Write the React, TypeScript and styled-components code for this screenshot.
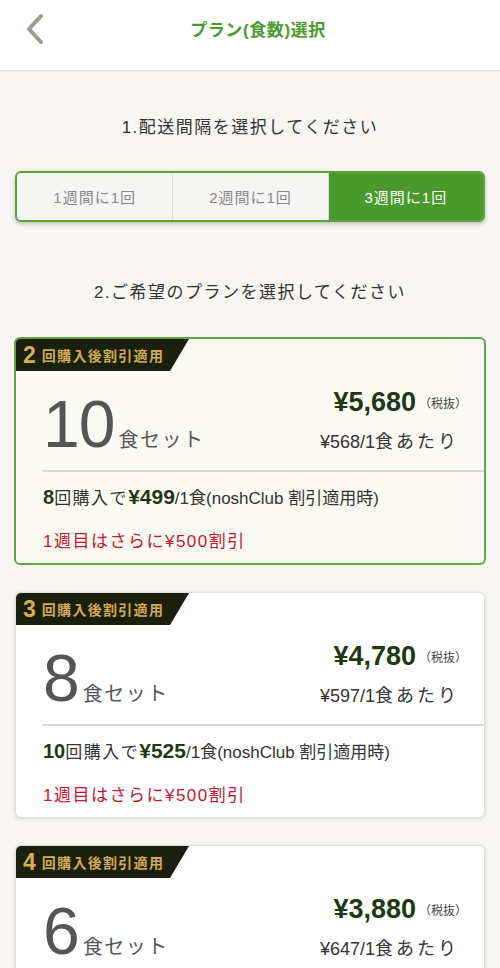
import React from "react";
import styled, { createGlobalStyle } from "styled-components";

const GlobalStyle = createGlobalStyle`
  html, body { margin: 0; padding: 0; background: #f7f6f2; }
  body { font-family: "Liberation Sans", "Noto Sans CJK JP", sans-serif; color: #333; }
  * { box-sizing: border-box; }
`;

const Page = styled.div`
  width: 500px;
  min-height: 968px;
  background: #f7f6f2;
  overflow: hidden;
`;

const Header = styled.header`
  height: 71px;
  background: #fff;
  border-bottom: 1px solid #dcdcdc;
  box-shadow: 0 1px 2px rgba(0, 0, 0, 0.04);
  display: grid;
  grid-template-columns: 60px 1fr 60px;
  align-items: start;
`;

const BackButton = styled.div`
  height: 56px;
  display: flex;
  align-items: center;
  padding-left: 25px;
  padding-top: 2px;
`;

const HeaderTitle = styled.h1`
  margin: 0 0 0 16px;
  height: 56px;
  display: flex;
  align-items: center;
  justify-content: center;
  font-size: 17px;
  font-weight: 700;
  letter-spacing: 0.6px;
  color: #4b9a2f;
`;

const Main = styled.main`
  padding: 0 14px 40px;
`;

const SectionTitle = styled.h2<{ $top: number }>`
  margin: ${(p) => p.$top}px 0 0;
  text-align: center;
  font-size: 17px;
  line-height: 26px;
  font-weight: 400;
  letter-spacing: 1.5px;
  color: #333;
`;

const Segmented = styled.div`
  margin: 30px 1px 0;
  height: 51px;
  display: grid;
  grid-template-columns: 1fr 1fr 1fr;
  border: 2px solid #5ba23b;
  border-radius: 6px;
  overflow: hidden;
  box-shadow: 0 2px 4px rgba(0, 0, 0, 0.22);
  background: #f5f5f4;
`;

const Segment = styled.div<{ $active?: boolean }>`
  display: flex;
  align-items: center;
  justify-content: center;
  font-size: 15px;
  letter-spacing: 1px;
  color: ${(p) => (p.$active ? "#fff" : "#8a8a8a")};
  background: ${(p) => (p.$active ? "#489a2c" : "#f5f5f4")};
  & + & {
    border-left: 1px solid #dcdcdc;
  }
`;

const PlanList = styled.div`
  margin-top: 31px;
  display: flex;
  flex-direction: column;
  gap: 27px;
`;

const Card = styled.div<{ $selected?: boolean }>`
  position: relative;
  border: ${(p) => (p.$selected ? "2px solid #63a447" : "1px solid #dedede")};
  margin: ${(p) => (p.$selected ? "0" : "0 1px")};
  border-radius: 6px;
  background: ${(p) => (p.$selected ? "#fbfbf4" : "#ffffff")};
  box-shadow: ${(p) => (p.$selected ? "none" : "0 1px 4px rgba(0,0,0,0.14)")};
  overflow: hidden;
  padding-bottom: 9px;
`;

const Badge = styled.div`
  width: 173px;
  height: 32px;
  background: #1b1f0e;
  clip-path: polygon(0 0, 100% 0, calc(100% - 19px) 100%, 0 100%);
  display: flex;
  align-items: center;
  padding-left: 7px;
  gap: 6px;
`;

const BadgeNum = styled.span`
  font-size: 23px;
  font-weight: 700;
  color: #d8ae55;
  line-height: 1;
`;

const BadgeText = styled.span`
  font-size: 14px;
  font-weight: 700;
  letter-spacing: 1.3px;
  color: #d3aa55;
  line-height: 1;
  padding-top: 2px;
`;

const CardBody = styled.div`
  padding-left: 27px;
`;

const MainRow = styled.div`
  margin-top: 15px;
  display: flex;
  justify-content: space-between;
  align-items: flex-start;
  padding-right: 17px;
`;

const CountBlock = styled.div`
  margin-top: 5px;
  display: flex;
  align-items: baseline;
  color: #555;
  line-height: 66px;
  height: 66px;
`;

const Count = styled.span`
  font-size: 66px;
  font-weight: 400;
  letter-spacing: -1px;
`;

const CountUnit = styled.span`
  font-size: 20px;
  letter-spacing: 1.5px;
  margin-left: 4px;
`;

const PriceBlock = styled.div`
  display: flex;
  flex-direction: column;
  align-items: flex-end;
`;

const PriceRow = styled.div`
  display: flex;
  align-items: baseline;
  line-height: 32px;
`;

const Price = styled.span`
  font-size: 27px;
  font-weight: 700;
  color: #1f3714;
`;

const TaxNote = styled.span`
  font-size: 12px;
  color: #444;
  margin-left: 3px;
  position: relative;
  top: -3px;
`;

const PerMeal = styled.div`
  margin-top: 7px;
  margin-right: 8px;
  font-size: 18px;
  line-height: 24px;
  color: #333;
`;

const Kana = styled.span<{ $ls: number }>`
  letter-spacing: ${(p) => p.$ls}px;
`;

const Divider = styled.hr`
  margin: 13px 0 0;
  border: 0;
  height: 2px;
  background: #d9d9d4;
`;

const ClubLine = styled.div`
  margin-top: 13px;
  line-height: 24px;
  font-size: 17px;
  color: #333;
  display: flex;
  align-items: baseline;
  white-space: nowrap;
`;

const Strong = styled.span<{ $size: number }>`
  font-size: ${(p) => p.$size}px;
  font-weight: 700;
  color: #1f3714;
`;

const Lead = styled.span`
  font-size: 17px;
  letter-spacing: 1.5px;
`;

const DiscountLine = styled.div`
  margin-top: 19px;
  font-size: 17px;
  line-height: 24px;
  letter-spacing: 1.5px;
  color: #c4162c;
`;

type Plan = {
  after: number;
  count: number;
  price: string;
  per: string;
  times: number;
  club: string;
  selected?: boolean;
};

const plans: Plan[] = [
  { after: 2, count: 10, price: "¥5,680", per: "¥568/1", times: 8, club: "¥499", selected: true },
  { after: 3, count: 8, price: "¥4,780", per: "¥597/1", times: 10, club: "¥525" },
  { after: 4, count: 6, price: "¥3,880", per: "¥647/1", times: 12, club: "¥555" },
];

const BackIcon = () => (
  <svg width="20" height="32" viewBox="0 0 20 32" fill="none">
    <polyline
      points="16,3 4,16 16,29"
      stroke="#9b9b93"
      strokeWidth="4"
      strokeLinecap="round"
      strokeLinejoin="round"
    />
  </svg>
);

export default function App() {
  return (
    <Page>
      <GlobalStyle />
      <Header>
        <BackButton>
          <BackIcon />
        </BackButton>
        <HeaderTitle>プラン(食数)選択</HeaderTitle>
        <div />
      </Header>
      <Main>
        <SectionTitle $top={44}>1.配送間隔を選択してください</SectionTitle>
        <Segmented>
          <Segment>1週間に1回</Segment>
          <Segment>2週間に1回</Segment>
          <Segment $active>3週間に1回</Segment>
        </Segmented>
        <SectionTitle $top={58}>2.ご希望のプランを選択してください</SectionTitle>
        <PlanList>
          {plans.map((p) => (
            <Card key={p.count} $selected={p.selected}>
              <Badge>
                <BadgeNum>{p.after}</BadgeNum>
                <BadgeText>回購入後割引適用</BadgeText>
              </Badge>
              <CardBody>
                <MainRow>
                  <CountBlock>
                    <Count>{p.count}</Count>
                    <CountUnit>食セット</CountUnit>
                  </CountBlock>
                  <PriceBlock>
                    <PriceRow>
                      <Price>{p.price}</Price>
                      <TaxNote>（税抜）</TaxNote>
                    </PriceRow>
                    <PerMeal>
                      {p.per}
                      <Kana $ls={3}>食あたり</Kana>
                    </PerMeal>
                  </PriceBlock>
                </MainRow>
                <Divider />
                <ClubLine>
                  <Strong $size={20}>{p.times}</Strong>
                  <Lead>回購入で</Lead>
                  <Strong $size={21}>{p.club}</Strong>
                  <span>/1食(noshClub 割引適用時)</span>
                </ClubLine>
                <DiscountLine>1週目はさらに¥500割引</DiscountLine>
              </CardBody>
            </Card>
          ))}
        </PlanList>
      </Main>
    </Page>
  );
}
